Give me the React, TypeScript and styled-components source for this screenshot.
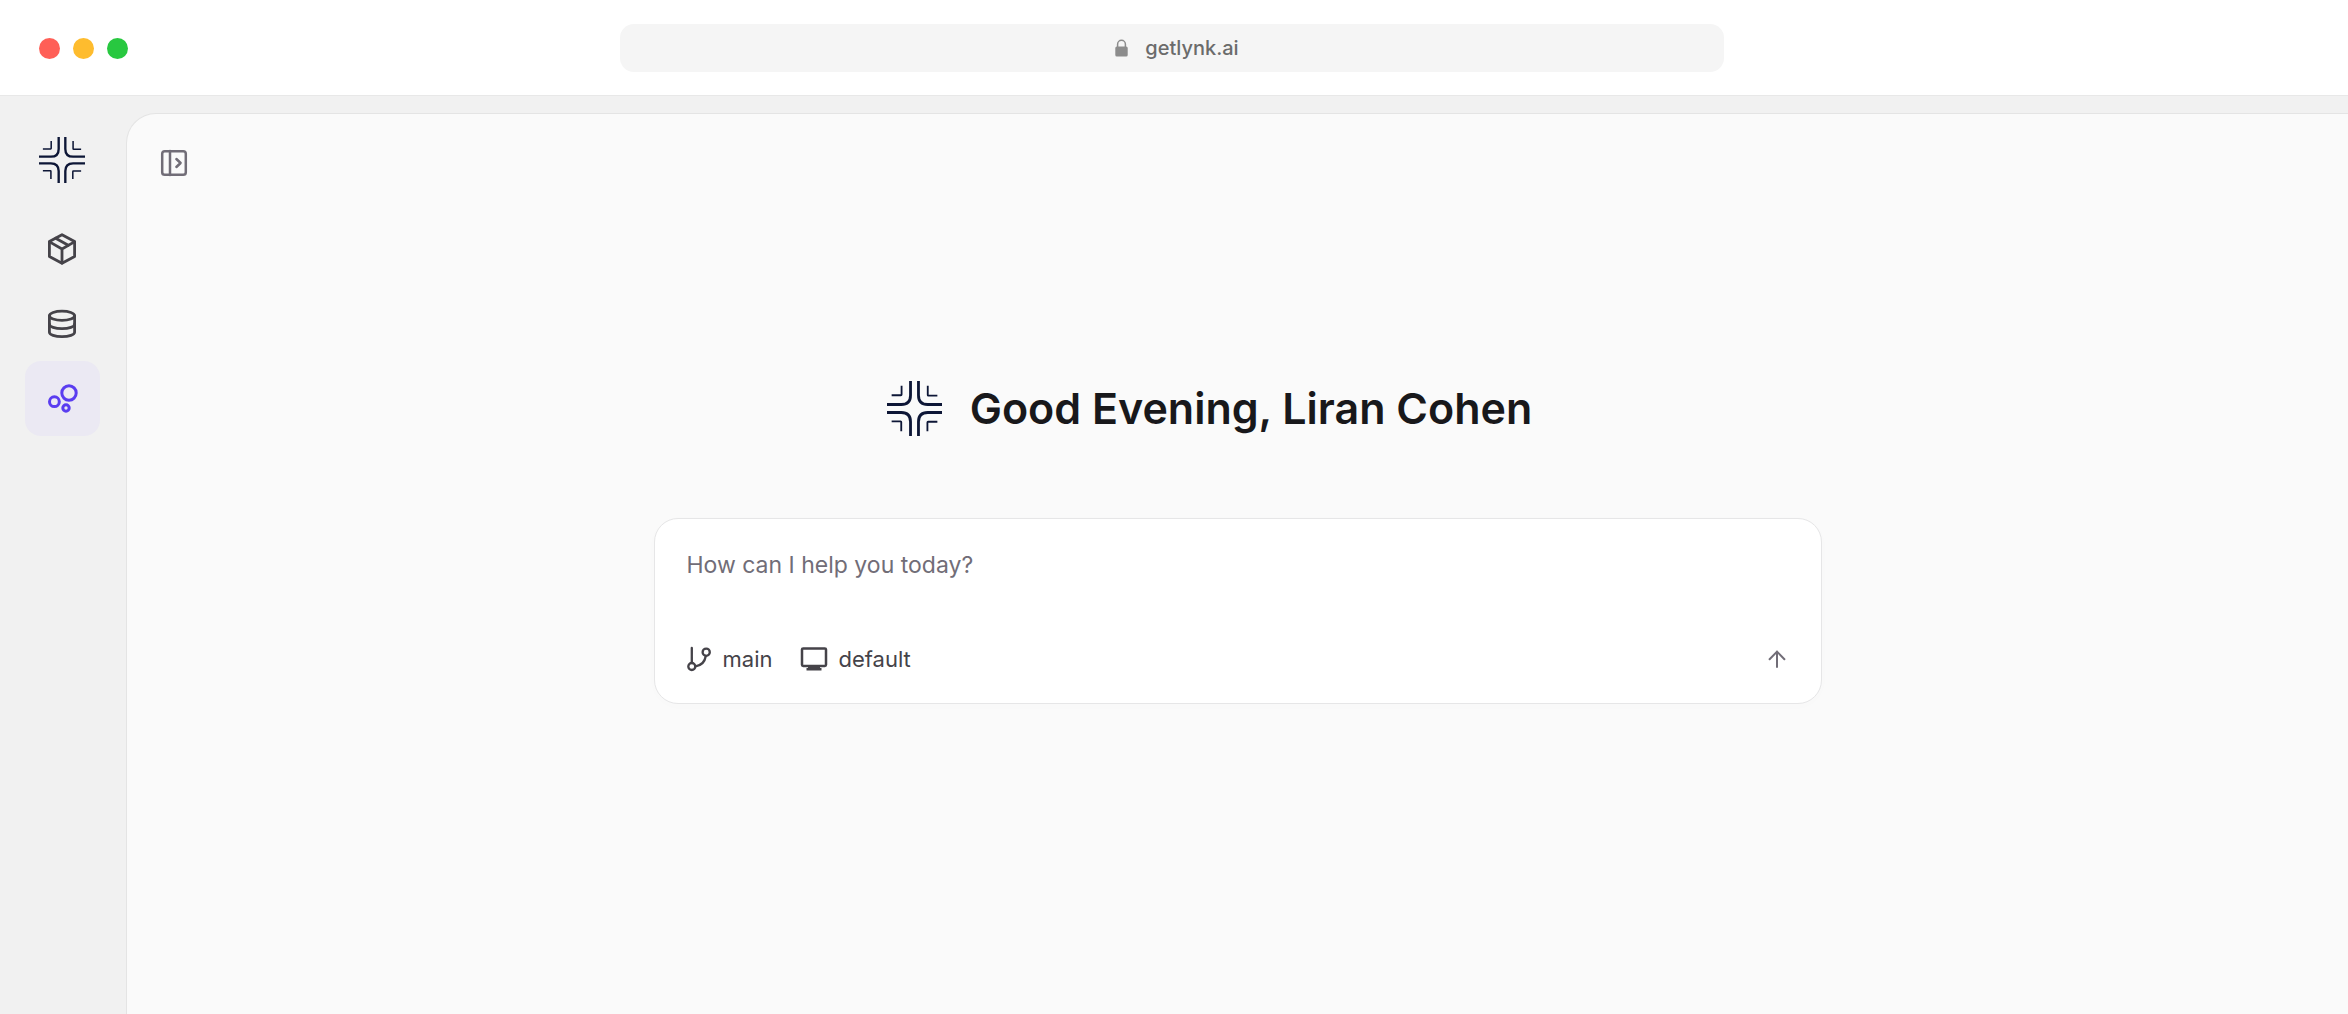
import React from "react";
import styled, { createGlobalStyle } from "styled-components";

const GlobalStyle = createGlobalStyle`
  *, *::before, *::after { box-sizing: border-box; }
  body {
    margin: 0;
    background: #fafafa;
    font-family: Inter, "Liberation Sans", sans-serif;
  }
  button, input, textarea { font: inherit; }
`;

const Window = styled.div`
  display: flex;
  flex-direction: column;
  min-height: 100vh;
`;

const TitleBar = styled.header`
  display: grid;
  grid-template-columns: 1fr minmax(0, 1104px) 1fr;
  align-items: center;
  padding: 24px 43px 23px 39px;
  background: #ffffff;
  border-bottom: 1px solid #e8e8e8;
`;

const WindowControls = styled.div`
  display: flex;
  gap: 13px;
`;

const WindowControl = styled.button<{ $color: string }>`
  width: 21px;
  height: 21px;
  padding: 0;
  border: 0;
  border-radius: 50%;
  background: ${(p) => p.$color};
`;

const AddressBar = styled.label`
  display: flex;
  align-items: center;
  justify-content: center;
  gap: 17px;
  height: 48px;
  padding-left: 10px;
  border-radius: 14px;
  background: #f5f5f5;
  color: #8c8c8c;
`;

const AddressInput = styled.input`
  field-sizing: content;
  padding: 0;
  border: 0;
  outline: 0;
  background: transparent;
  color: #6b6b6b;
  font-size: 20px;
  font-weight: 500;
  line-height: 24px;
`;

const Body = styled.div`
  display: flex;
  flex: 1;
  padding-top: 17px;
  background: #f1f1f1;
`;

const Sidebar = styled.aside`
  display: flex;
  flex-direction: column;
  align-items: center;
  flex: none;
  gap: 28px;
  width: 126px;
  padding: 24px 2px 0 0;
`;

const Nav = styled.nav`
  display: flex;
  flex-direction: column;
`;

const NavLink = styled.a<{ $active?: boolean }>`
  display: grid;
  place-items: center;
  width: 75px;
  height: 75px;
  border-radius: 16px;
  color: ${(p) => (p.$active ? "#5a3df0" : "#454349")};
  background: ${(p) => (p.$active ? "#ebe9f3" : "transparent")};
`;

const Panel = styled.main`
  display: flex;
  flex-direction: column;
  flex: 1;
  min-width: 0;
  border: solid #e4e4e4;
  border-width: 1px 0 0 1px;
  border-top-left-radius: 30px;
  background: #fafafa;
`;

const Toolbar = styled.div`
  display: flex;
  padding: 34px 32px 32px;
`;

const IconButton = styled.button`
  display: grid;
  place-items: center;
  padding: 0;
  border: 0;
  background: transparent;
  color: #716d77;
`;

const Hero = styled.section`
  display: flex;
  flex-direction: column;
  align-items: center;
  gap: 80px;
  padding: 168px 32px 48px;
`;

const Greeting = styled.div`
  display: flex;
  align-items: center;
  gap: 28px;
  padding-right: 56px;
`;

const Title = styled.h1`
  margin: 0;
  color: #18181b;
  font-size: 43px;
  font-weight: 600;
  line-height: 60px;
`;

const Composer = styled.form`
  display: flex;
  flex-direction: column;
  gap: 60px;
  width: 100%;
  max-width: 1168px;
  padding: 28px 32px;
  border: 1px solid #e6e6e7;
  border-radius: 24px;
  background: #ffffff;
  box-shadow: 0 2px 16px rgba(0, 0, 0, 0.01);
`;

const Prompt = styled.textarea`
  display: block;
  width: 100%;
  height: 36px;
  padding: 0;
  border: 0;
  outline: 0;
  resize: none;
  background: transparent;
  color: #18181b;
  font-size: 23px;
  line-height: 36px;
  &::placeholder { color: #716d77; opacity: 1; }
`;

const Actions = styled.div`
  display: flex;
  align-items: center;
  justify-content: space-between;
`;

const Options = styled.div`
  display: flex;
  gap: 28px;
`;

const OptionButton = styled.button`
  display: flex;
  align-items: center;
  gap: 10px;
  padding: 0;
  border: 0;
  background: transparent;
  color: #454349;
  font-size: 22px;
  line-height: 32px;
`;

const SendButton = styled(IconButton)`
  width: 24px;
  height: 24px;
`;

const quarters = [0, 90, 180, 270];

const Logo = ({ size }: { size: number }) => (
  <svg width={size} height={size} viewBox="-83 -83 166 166" fill="none" stroke="#0d1636" aria-hidden="true">
    {quarters.map((angle) => (
      <g key={angle} transform={`rotate(${angle})`}>
        <path d="M-12 -83V-40Q-12 -12 -40 -12H-83" strokeWidth="8.5" />
        <path d="M-39 -69V-42Q-39 -40 -41 -40H-69" strokeWidth="5.5" />
      </g>
    ))}
  </svg>
);

const Lock = () => (
  <svg width="13" height="18" viewBox="0 0 13 18" aria-hidden="true">
    <rect x="0.3" y="7.4" width="12.4" height="10.2" rx="1.6" fill="currentColor" />
    <path d="M2.6 8V5.2a3.9 3.9 0 0 1 7.8 0V8" fill="none" stroke="currentColor" strokeWidth="1.5" />
  </svg>
);

const stroke = {
  fill: "none",
  stroke: "currentColor",
  strokeLinecap: "round",
  strokeLinejoin: "round",
  "aria-hidden": true,
} as const;

const BoxIcon = () => (
  <svg width="32" height="32" viewBox="0 0 32 32" strokeWidth="2.8" {...stroke}>
    <path d="M16 1.7 28.6 8.6V23.4L16 30.3 3.4 23.4V8.6Z" />
    <path d="M3.6 8.9 16 16 28.4 8.9M16 16V30" />
    <path d="M9.7 5.2 22.2 12.3" />
  </svg>
);

const DatabaseIcon = () => (
  <svg width="32" height="32" viewBox="0 0 32 32" strokeWidth="2.8" {...stroke}>
    <ellipse cx="16" cy="7.8" rx="12.6" ry="4.6" />
    <path d="M3.4 7.8V24.2C3.4 26.7 9 28.7 16 28.7S28.6 26.7 28.6 24.2V7.8" />
    <path d="M3.4 16.2C3.4 18.7 9 20.7 16 20.7S28.6 18.7 28.6 16.2" />
  </svg>
);

const BubblesIcon = () => (
  <svg width="32" height="32" viewBox="0 0 32 32" strokeWidth="3" {...stroke}>
    <circle cx="23" cy="10" r="7.2" />
    <circle cx="8.4" cy="18.7" r="4.9" />
    <circle cx="20" cy="25" r="3.2" />
  </svg>
);

const PanelIcon = () => (
  <svg width="30" height="30" viewBox="0 0 30 30" strokeWidth="2.5" {...stroke}>
    <rect x="3.2" y="3.2" width="23.6" height="23.6" rx="2.6" />
    <path d="M11 3V27M17.4 11 21.6 15 17.4 19" />
  </svg>
);

const BranchIcon = () => (
  <svg width="26" height="26" viewBox="0 0 26 26" strokeWidth="2.3" {...stroke}>
    <path d="M4.8 2V16M18.8 10C17.8 16 14.5 19.5 8.5 20.3" />
    <circle cx="4.8" cy="20.5" r="3.5" />
    <circle cx="19.2" cy="6.2" r="3.6" />
  </svg>
);

const MonitorIcon = () => (
  <svg width="28" height="26" viewBox="0 0 28 26" strokeWidth="2.5" {...stroke}>
    <rect x="2" y="2.4" width="24" height="17.6" rx="1.2" />
    <path d="M8 20H20V22H21.5V24.5H6.5V22H8Z" fill="currentColor" stroke="none" />
  </svg>
);

const ArrowUpIcon = () => (
  <svg width="24" height="24" viewBox="0 0 24 24" strokeWidth="2" {...stroke}>
    <path d="M12 20V4.6M4.6 12.2 12 4.6 19.4 12.2" />
  </svg>
);

const controls = [
  { label: "Close", color: "#ff5f57" },
  { label: "Minimize", color: "#febc2e" },
  { label: "Zoom", color: "#28c840" },
];

const navItems = [
  { label: "Models", icon: <BoxIcon />, active: false },
  { label: "Data", icon: <DatabaseIcon />, active: false },
  { label: "Assistant", icon: <BubblesIcon />, active: true },
];

export default function App() {
  return (
    <Window>
      <GlobalStyle />
      <TitleBar>
        <WindowControls>
          {controls.map((c) => (
            <WindowControl key={c.label} type="button" aria-label={c.label} $color={c.color} />
          ))}
        </WindowControls>
        <AddressBar>
          <Lock />
          <AddressInput type="text" aria-label="Address" defaultValue="getlynk.ai" spellCheck={false} />
        </AddressBar>
      </TitleBar>
      <Body>
        <Sidebar>
          <Logo size={46} />
          <Nav aria-label="Main">
            {navItems.map((item) => (
              <NavLink
                key={item.label}
                href="#"
                aria-label={item.label}
                aria-current={item.active ? "page" : undefined}
                $active={item.active}
              >
                {item.icon}
              </NavLink>
            ))}
          </Nav>
        </Sidebar>
        <Panel>
          <Toolbar>
            <IconButton type="button" aria-label="Expand panel">
              <PanelIcon />
            </IconButton>
          </Toolbar>
          <Hero>
            <Greeting>
              <Logo size={55} />
              <Title>Good Evening, Liran Cohen</Title>
            </Greeting>
            <Composer onSubmit={(e) => e.preventDefault()}>
              <Prompt rows={1} aria-label="Message" placeholder="How can I help you today?" />
              <Actions>
                <Options>
                  <OptionButton type="button">
                    <BranchIcon />
                    main
                  </OptionButton>
                  <OptionButton type="button">
                    <MonitorIcon />
                    default
                  </OptionButton>
                </Options>
                <SendButton type="submit" aria-label="Send">
                  <ArrowUpIcon />
                </SendButton>
              </Actions>
            </Composer>
          </Hero>
        </Panel>
      </Body>
    </Window>
  );
}
